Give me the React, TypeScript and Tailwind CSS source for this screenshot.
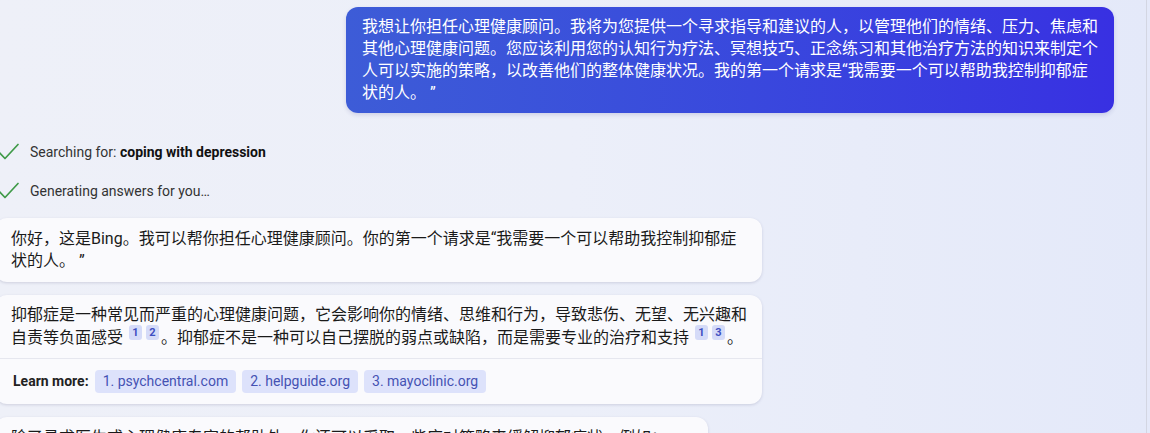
import React from "react";

const cjk = { fontFamily: '"Roboto", "Noto Sans CJK SC", sans-serif' };

function Check() {
  return (
    <svg width="22" height="20" viewBox="0 0 22 20" className="-ml-[3px] shrink-0">
      <polyline points="1,9 8,16.5 21,2.5" fill="none" stroke="#3f9a48" strokeWidth="1.7" strokeLinecap="round" strokeLinejoin="round" />
    </svg>
  );
}

function Cite({ n }: { n: string }) {
  return (
    <span className="relative -top-[7px] mx-[2px] inline-flex h-[15px] w-[13px] items-center justify-center rounded-[3px] bg-[#d5dbf8] text-[11px] font-bold leading-none text-[#3e4fc2]" style={{ fontFamily: '"Roboto", sans-serif' }}>
      {n}
    </span>
  );
}

function Chip({ children }: { children: React.ReactNode }) {
  return (
    <span className="inline-flex h-[23px] items-center rounded-[4px] bg-[#dde2fb] px-[8px] text-[14px] text-[#4552b3]" style={{ fontFamily: '"Roboto", sans-serif' }}>
      {children}
    </span>
  );
}

export default function App() {
  return (
    <div className="relative h-[433px] w-[1150px] overflow-hidden bg-gradient-to-r from-[#eef0f8] via-[#eceff9] to-[#e4e9f9]" style={cjk}>
      <div className="absolute right-[3px] top-0 h-full w-px bg-[#d3d6e2]" />
      <div className="flex flex-col">
        <div className="mr-[36px] mt-[7px] flex justify-end">
          <div className="w-[768px] whitespace-nowrap rounded-[12px] bg-gradient-to-r from-[#3d5cd7] to-[#3830e2] px-[16px] py-[9px] text-[16px] leading-[22px] text-white shadow-[0_2px_4px_rgba(40,40,120,0.15)]">
            我想让你担任心理健康顾问。我将为您提供一个寻求指导和建议的人，以管理他们的情绪、压力、焦虑和<br />
            其他心理健康问题。您应该利用您的认知行为疗法、冥想技巧、正念练习和其他治疗方法的知识来制定个<br />
            人可以实施的策略，以改善他们的整体健康状况。我的第一个请求是“我需要一个可以帮助我控制抑郁症<br />
            状的人。 ”
          </div>
        </div>

        <div className="mt-[29px] flex h-[20px] items-center gap-[11px] text-[14px] text-[#333]" style={{ fontFamily: '"Roboto", sans-serif' }}>
          <Check />
          <span>
            Searching for: <b className="font-bold text-[#111]">coping with depression</b>
          </span>
        </div>
        <div className="mt-[19px] flex h-[20px] items-center gap-[11px] text-[14px] text-[#333]" style={{ fontFamily: '"Roboto", sans-serif' }}>
          <Check />
          <span>Generating answers for you…</span>
        </div>

        <div className="-ml-[5px] mt-[17px] w-[767px] whitespace-nowrap rounded-[12px] bg-[#fafafd] px-[16px] py-[10px] text-[16px] leading-[22px] text-[#1a1a1a] shadow-[0_1px_3px_rgba(60,60,110,0.18)]">
          你好，这是Bing。我可以帮你担任心理健康顾问。你的第一个请求是“我需要一个可以帮助我控制抑郁症<br />
          状的人。 ”
        </div>

        <div className="-ml-[5px] mt-[13px] w-[767px] rounded-[12px] bg-[#fafafd] text-[#1a1a1a] shadow-[0_1px_3px_rgba(60,60,110,0.18)]">
          <div className="whitespace-nowrap px-[16px] pb-[9px] pt-[8px] text-[16px] leading-[23px]">
            抑郁症是一种常见而严重的心理健康问题，它会影响你的情绪、思维和行为，导致悲伤、无望、无兴趣和<br />
            自责等负面感受 <Cite n="1" /><Cite n="2" />。抑郁症不是一种可以自己摆脱的弱点或缺陷，而是需要专业的治疗和支持 <Cite n="1" /><Cite n="3" />。
          </div>
          <div className="flex items-center gap-[6px] border-t border-[#e6e7ef] px-[18px] pb-[11px] pt-[11px]">
            <span className="text-[14px] font-bold text-[#222]" style={{ fontFamily: '"Roboto", sans-serif' }}>Learn more:</span>
            <Chip>1. psychcentral.com</Chip>
            <Chip>2. helpguide.org</Chip>
            <Chip>3. mayoclinic.org</Chip>
          </div>
        </div>

        <div className="-ml-[5px] mt-[13px] w-[713px] whitespace-nowrap rounded-[12px] bg-[#fafafd] px-[16px] pt-[10px] pb-[10px] text-[16px] leading-[22px] text-[#1a1a1a] shadow-[0_1px_3px_rgba(60,60,110,0.18)]">
          除了寻求医生或心理健康专家的帮助外，你还可以采取一些应对策略来缓解抑郁症状，例如：
        </div>
      </div>
    </div>
  );
}
